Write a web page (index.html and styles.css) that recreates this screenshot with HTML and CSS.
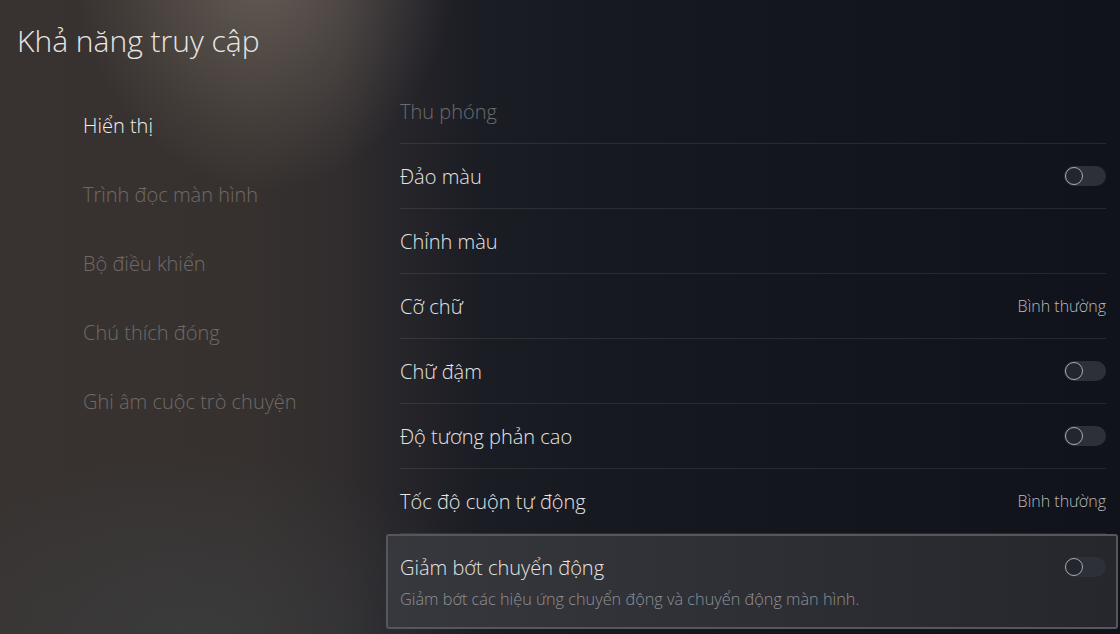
FILE: index.html
```html
<!DOCTYPE html>
<html lang="vi">
<head>
<meta charset="utf-8">
<title>Khả năng truy cập</title>
<link rel="stylesheet" href="styles.css">
</head>
<body>
<div class="screen">
  <header class="title">Khả năng truy cập</header>
  <div class="body">
    <nav class="menu">
      <div class="menu-item active">Hiển thị</div>
      <div class="menu-item">Trình đọc màn hình</div>
      <div class="menu-item">Bộ điều khiển</div>
      <div class="menu-item">Chú thích đóng</div>
      <div class="menu-item">Ghi âm cuộc trò chuyện</div>
    </nav>
    <section class="list">
      <div class="row dim"><span class="label">Thu phóng</span></div>
      <div class="row"><span class="label">Đảo màu</span><span class="toggle"><span class="knob"></span></span></div>
      <div class="row"><span class="label">Chỉnh màu</span></div>
      <div class="row"><span class="label">Cỡ chữ</span><span class="value">Bình thường</span></div>
      <div class="row"><span class="label">Chữ đậm</span><span class="toggle"><span class="knob"></span></span></div>
      <div class="row"><span class="label">Độ tương phản cao</span><span class="toggle"><span class="knob"></span></span></div>
      <div class="row"><span class="label">Tốc độ cuộn tự động</span><span class="value">Bình thường</span></div>
      <div class="row-focus">
        <div class="focus-head"><span class="label">Giảm bớt chuyển động</span><span class="toggle"><span class="knob"></span></span></div>
        <div class="desc">Giảm bớt các hiệu ứng chuyển động và chuyển động màn hình.</div>
      </div>
    </section>
  </div>
</div>
</body>
</html>
```
FILE: styles.css
```css
* { box-sizing: border-box; }
html, body { margin: 0; padding: 0; }
body {
  width: 1120px;
  height: 634px;
  overflow: hidden;
  font-family: "Open Sans", "Noto Sans", sans-serif;
  font-weight: 300;
  background-color: #12151c;
}
.screen {
  width: 1120px;
  height: 634px;
  overflow: hidden;
  background:
    radial-gradient(ellipse 190px 230px at 265px -40px, rgba(150,136,124,0.5), rgba(150,136,124,0) 100%),
    radial-gradient(ellipse 300px 190px at 200px 640px, rgba(66,74,80,0.4), rgba(66,74,80,0) 100%),
    linear-gradient(to right, #383331 0px, #36312f 250px, #312d2e 340px, #26252a 400px, #1b1d24 480px, #161920 600px, #13161d 800px, #10131b 1120px);
}
.title {
  padding: 23px 0 0 17px;
  height: 59px;
  font-size: 30px;
  line-height: 36px;
  color: #e8e6e4;
}
.body {
  display: grid;
  grid-template-columns: 386px 1fr;
}
.menu {
  padding: 32px 0 0 83px;
}
.menu-item {
  height: 69px;
  line-height: 69px;
  font-size: 20px;
  color: #6f6a67;
  white-space: nowrap;
}
.menu-item.active { color: #f2f0ee; }
.list {
  padding-top: 20px;
}
.row {
  height: 65px;
  margin: 0 14px;
  border-bottom: 1px solid rgba(255,255,255,0.09);
  display: flex;
  align-items: center;
  justify-content: space-between;
  font-size: 20px;
  color: #e4e4e4;
}
.row.dim { color: #6b6c70; }
.value {
  font-size: 16px;
  color: #b9babd;
}
.toggle {
  width: 42px;
  height: 20px;
  border-radius: 10px;
  background: #2d3038;
  display: flex;
  align-items: center;
  padding-left: 1px;
}
.knob {
  width: 18px;
  height: 18px;
  border-radius: 50%;
  border: 1.5px solid #a8aaae;
  background: #23262d;
}
.row-focus {
  margin: 0 2px 0 0;
  height: 95px;
  border: 2px solid #55575c;
  border-radius: 3px;
  background: linear-gradient(to right, #36383d 0%, #2e3035 45%, #25272c 100%);
  padding: 19px 10px 0 12px;
}
.focus-head {
  display: flex;
  align-items: center;
  justify-content: space-between;
  height: 24px;
  font-size: 20px;
  color: #e4e4e4;
}
.desc {
  margin-top: 10px;
  font-size: 16.3px;
  line-height: 20px;
  color: #8f9095;
}
```
